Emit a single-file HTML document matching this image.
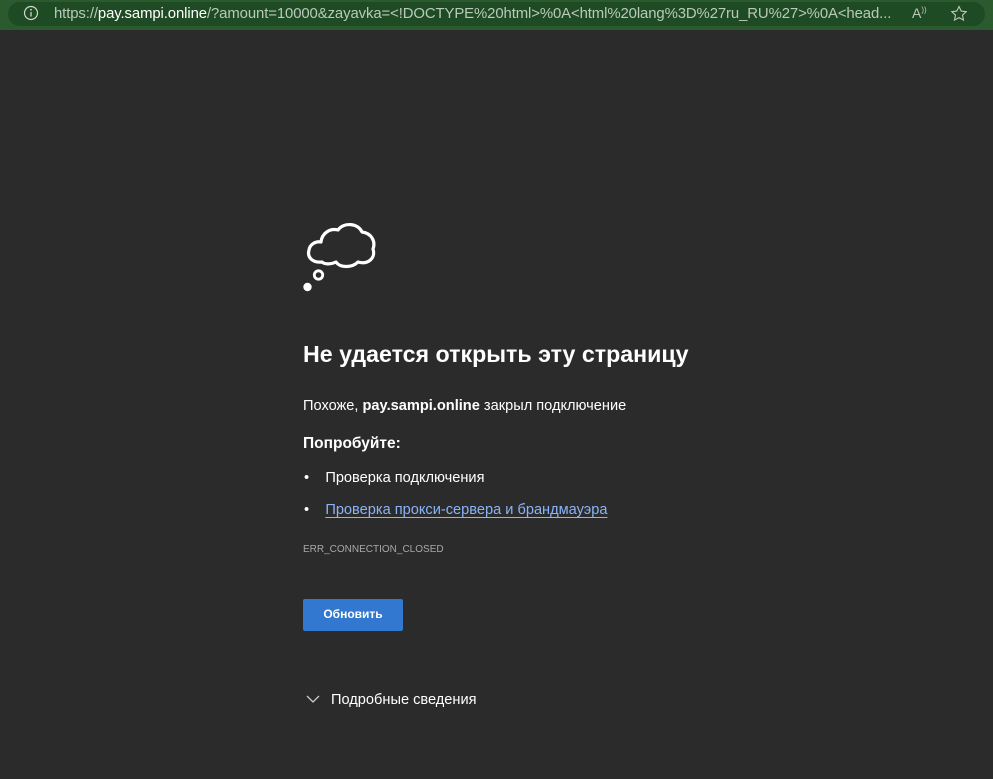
<!DOCTYPE html>
<html><head><meta charset="utf-8"><style>
html,body{margin:0;padding:0;width:993px;height:779px;background:#2b2b2b;overflow:hidden;font-family:"Liberation Sans","DejaVu Sans",sans-serif;color:#fff}
.top{position:absolute;left:0;top:0;width:993px;height:30px;background:#2a5a2e}
.pill{position:absolute;left:8px;top:2px;width:977px;height:24px;border-radius:12px;background:#1f4b24}
.url{position:absolute;left:54px;top:6px;font-size:14.9px;color:#b9c9ba;white-space:nowrap;letter-spacing:-0.1px}
.url b{color:#fff;font-weight:normal}
.t{position:absolute;white-space:nowrap}
h1{position:absolute;left:303px;top:341px;margin:0;font-size:23.2px;font-weight:bold}
.btn{position:absolute;left:303px;top:599px;width:100px;height:32px;background:#3277d0;border-radius:2px;font-size:12px;font-weight:bold;text-align:center;line-height:31px}
a{color:#8ab4f8;text-decoration:underline;text-underline-offset:3px}
</style></head><body>
<div class="top"><div class="pill"></div>
<svg style="position:absolute;left:23px;top:5px" width="16" height="16"><circle cx="8" cy="8" r="6.5" fill="none" stroke="#cfd8cf" stroke-width="1.2"/><line x1="8" y1="7" x2="8" y2="11.5" stroke="#cfd8cf" stroke-width="1.3"/><circle cx="8" cy="4.8" r=".9" fill="#cfd8cf"/></svg>
<div class="url">https://<b>pay.sampi.online</b>/?amount=10000&amp;zayavka=&lt;!DOCTYPE%20html&gt;%0A&lt;html%20lang%3D%27ru_RU%27&gt;%0A&lt;head...</div>
<div class="t" style="left:912px;top:5px;font-size:14px;color:#b9c9ba">A<sup style="font-size:8px">))</sup></div>
<svg style="position:absolute;left:950px;top:5px" width="18" height="18"><path d="M9 1.5l2.2 4.6 5 .6-3.7 3.4 1 5-4.5-2.5-4.5 2.5 1-5L1.8 6.7l5-.6z" fill="none" stroke="#b9c9ba" stroke-width="1.1"/></svg>
</div>
<svg style="position:absolute;left:300px;top:215px" width="80" height="80" viewBox="0 0 80 80">
<path d="M22 47 C12 48 7 42 9 35 C10 29 16 26 21 27 C22 18 30 13 38 15 C44 7 58 8 62 17 C71 18 76 26 73 34 C76 43 68 50 58 47 C52 53 40 53 36 47 C30 50 24 49 22 47 Z" fill="none" stroke="#fff" stroke-width="3.2" stroke-linejoin="round"/>
<circle cx="18.5" cy="60" r="4.2" fill="none" stroke="#fff" stroke-width="2.8"/>
<circle cx="7.5" cy="72" r="4.2" fill="#fff"/>
</svg>
<h1>Не удается открыть эту страницу</h1>
<div class="t" style="left:303px;top:398px;font-size:14.6px">Похоже, <b>pay.sampi.online</b> закрыл подключение</div>
<div class="t" style="left:303px;top:435px;font-size:15.5px;font-weight:bold">Попробуйте:</div>
<div class="t" style="left:304px;top:470px;font-size:14.6px">•&nbsp;&nbsp;&nbsp;&nbsp;Проверка подключения</div>
<div class="t" style="left:304px;top:502px;font-size:14.6px">•&nbsp;&nbsp;&nbsp;&nbsp;<a>Проверка прокси-сервера и брандмауэра</a></div>
<div class="t" style="left:303px;top:544px;font-size:10px;color:#a8a8a8">ERR_CONNECTION_CLOSED</div>
<div class="btn">Обновить</div>
<svg style="position:absolute;left:306px;top:694px" width="14" height="10"><path d="M1 2l6 6 6-6" fill="none" stroke="#ccc" stroke-width="1.3"/></svg>
<div class="t" style="left:331px;top:692px;font-size:14.6px">Подробные сведения</div>
</body></html>
